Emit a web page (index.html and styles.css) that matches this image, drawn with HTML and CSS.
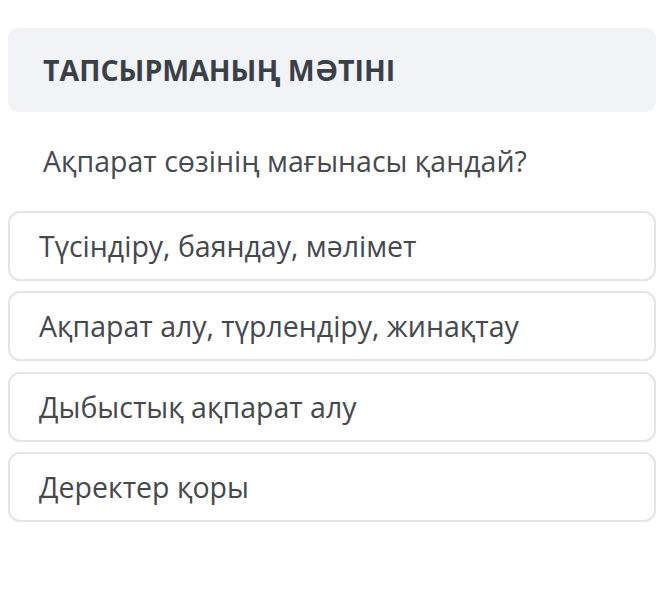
FILE: index.html
```html
<!DOCTYPE html>
<html lang="kk">
<head>
<meta charset="utf-8">
<link rel="stylesheet" href="styles.css">
</head>
<body>
<div class="page">
  <div class="head"><h1 class="title">ТАПСЫРМАНЫҢ МӘТІНІ</h1></div>
  <p class="question">Ақпарат сөзінің мағынасы қандай?</p>
  <div class="options">
    <div class="option">Түсіндіру, баяндау, мәлімет</div>
    <div class="option">Ақпарат алу, түрлендіру, жинақтау</div>
    <div class="option">Дыбыстық ақпарат алу</div>
    <div class="option">Деректер қоры</div>
  </div>
</div>
</body>
</html>
```
FILE: styles.css
```css
html, body { margin: 0; padding: 0; background: #fff; }
body { font-family: "Open Sans", "Noto Sans", sans-serif; color: #3f434a; }
.page { padding: 28px 15px 0 8px; }
.head {
  background: #f2f3f6;
  border-radius: 10px;
  height: 84px;
  display: flex;
  align-items: center;
  padding-left: 35px;
}
.title { margin: 0; font-size: 28.5px; font-weight: 700; color: #3b3f47; }
.question { margin: 0; padding: 30px 0 0 35px; height: 69px; font-size: 28.5px; line-height: 38px; color: #474a50; }
.options { display: flex; flex-direction: column; gap: 10.3px; }
.option {
  box-sizing: border-box;
  height: 70px;
  border: 2px solid #e3e4e6;
  border-radius: 12px;
  display: flex;
  align-items: center;
  padding-left: 29px;
  font-size: 28.5px;
  color: #45484d;
}
```
